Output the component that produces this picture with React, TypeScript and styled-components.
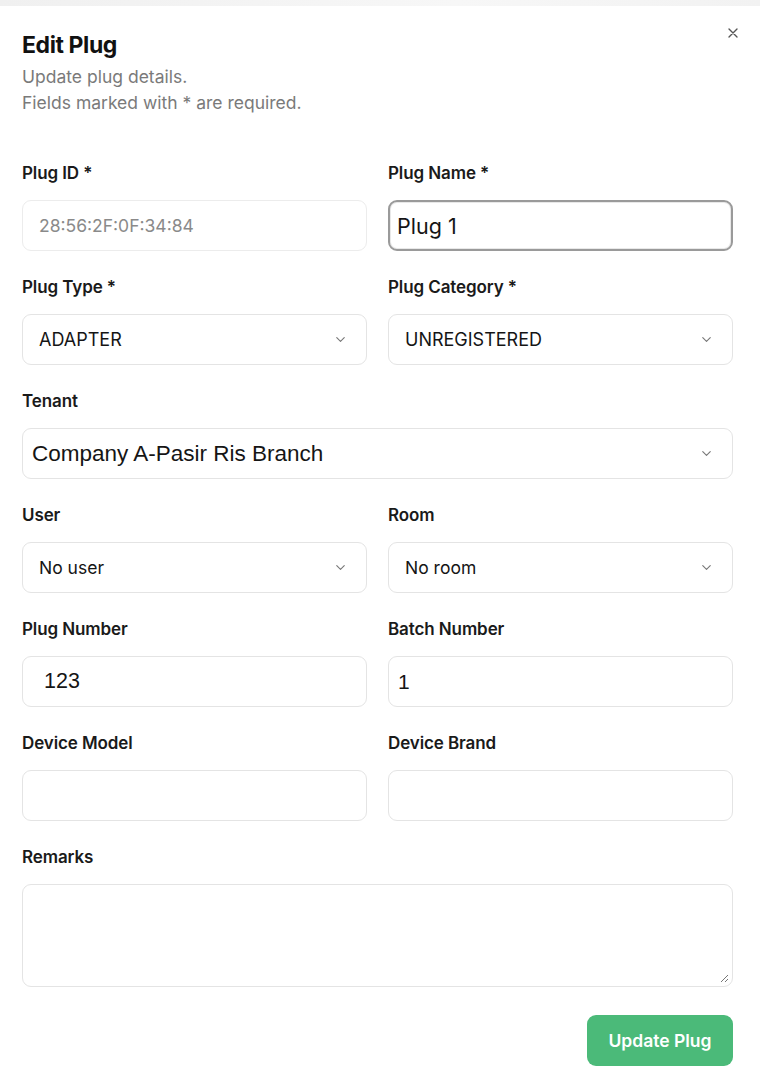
import React from 'react';
import styled, { createGlobalStyle } from 'styled-components';

const GlobalStyle = createGlobalStyle`
  html, body {
    margin: 0;
    padding: 0;
    background: #ffffff;
    font-family: 'Inter', 'Noto Sans', sans-serif;
    color: #111;
  }
  * { box-sizing: border-box; }
`;

const TopStrip = styled.div`
  height: 6px;
  background: linear-gradient(to right, #f0f0f0, #f7f7f7 60%, #f2f2f2);
`;

const Dialog = styled.div`
  position: relative;
  padding: 25px 27px 8px 22px;
  background: #fff;
`;

const CloseButton = styled.button`
  position: absolute;
  top: 16px;
  right: 16px;
  width: 22px;
  height: 22px;
  border: none;
  background: none;
  padding: 0;
  color: #555;
  display: flex;
  align-items: center;
  justify-content: center;
  cursor: pointer;
`;

const Title = styled.h2`
  margin: 0;
  font-size: 23px;
  font-weight: 700;
  letter-spacing: -0.4px;
  line-height: 29px;
`;

const Subtitle = styled.p`
  margin: 4px 0 0;
  font-size: 17.5px;
  line-height: 26px;
  color: #7a7a7a;
`;

const Form = styled.form`
  margin-top: 47px;
  display: grid;
  grid-template-columns: 1fr 1fr;
  column-gap: 21px;
  row-gap: 26px;
`;

const Field = styled.div<{ wide?: boolean }>`
  display: flex;
  flex-direction: column;
  gap: 17px;
  grid-column: ${p => (p.wide ? '1 / -1' : 'auto')};
`;

const Label = styled.label`
  font-size: 17px;
  font-weight: 600;
  line-height: 20px;
  letter-spacing: -0.1px;
  color: #1a1a1a;
`;

const Box = styled.div<{ focused?: boolean; muted?: boolean; pad?: number }>`
  height: 51px;
  border-radius: 9px;
  border: ${p => (p.focused ? '2px solid #9a9a9a' : `1px solid ${p.muted ? '#ececec' : '#e4e4e4'}`)};
  box-shadow: ${p => (p.focused ? 'inset 0 0 0 1px #e8e8e8' : 'none')};
  background: #fff;
  display: flex;
  align-items: center;
  padding-left: ${p => p.pad ?? 16}px;
  padding-right: 18px;
`;

const Value = styled.span<{ tone?: 'muted' | 'normal'; size?: number; sans?: boolean }>`
  flex: 1;
  font-size: ${p => p.size ?? 18}px;
  color: ${p => (p.tone === 'muted' ? '#8a8a8a' : '#151515')};
  font-family: ${p => (p.sans ? "'Liberation Sans', Arial, sans-serif" : "'Inter', sans-serif")};
  white-space: nowrap;
`;

const TextArea = styled.div`
  position: relative;
  height: 103px;
  border-radius: 9px;
  border: 1px solid #e4e4e4;
`;

const Grip = styled.svg`
  position: absolute;
  right: 3px;
  bottom: 3px;
`;

const Footer = styled.div`
  display: flex;
  justify-content: flex-end;
  margin-top: 28px;
`;

const SubmitButton = styled.button`
  width: 146px;
  height: 51px;
  border: none;
  border-radius: 9px;
  background: #4bba79;
  color: #fff;
  font-family: 'Inter', sans-serif;
  font-size: 17.5px;
  font-weight: 600;
  cursor: pointer;
`;

const Chevron = () => (
  <svg width="15" height="15" viewBox="0 0 24 24" fill="none" stroke="#777" strokeWidth="1.8" strokeLinecap="round" strokeLinejoin="round">
    <path d="m6 9 6 6 6-6" />
  </svg>
);

type Select = { label: string; value: string; size?: number; sans?: boolean; wide?: boolean; pad?: number };

const SelectField: React.FC<Select> = ({ label, value, size, sans, wide, pad }) => (
  <Field wide={wide}>
    <Label>{label}</Label>
    <Box pad={pad}>
      <Value size={size} sans={sans}>{value}</Value>
      <Chevron />
    </Box>
  </Field>
);

const App: React.FC = () => (
  <>
    <GlobalStyle />
    <TopStrip />
    <Dialog>
      <CloseButton aria-label="Close">
        <svg width="16" height="16" viewBox="0 0 24 24" fill="none" stroke="currentColor" strokeWidth="2" strokeLinecap="round">
          <path d="M18 6 6 18M6 6l12 12" />
        </svg>
      </CloseButton>
      <Title>Edit Plug</Title>
      <Subtitle>
        Update plug details.
        <br />
        Fields marked with * are required.
      </Subtitle>

      <Form>
        <Field>
          <Label>Plug ID *</Label>
          <Box muted>
            <Value tone="muted" size={17.5}>28:56:2F:0F:34:84</Value>
          </Box>
        </Field>
        <Field>
          <Label>Plug Name *</Label>
          <Box focused pad={7}>
            <Value size={21.5}>Plug 1</Value>
          </Box>
        </Field>

        <SelectField label="Plug Type *" value="ADAPTER" />
        <SelectField label="Plug Category *" value="UNREGISTERED" />
        <SelectField label="Tenant" value="Company A-Pasir Ris Branch" size={22.5} sans wide pad={9} />
        <SelectField label="User" value="No user" size={17.5} />
        <SelectField label="Room" value="No room" size={17.5} />

        <Field>
          <Label>Plug Number</Label>
          <Box pad={21}>
            <Value size={21.5} sans>123</Value>
          </Box>
        </Field>
        <Field>
          <Label>Batch Number</Label>
          <Box pad={9}>
            <Value size={21} sans>1</Value>
          </Box>
        </Field>
        <Field>
          <Label>Device Model</Label>
          <Box />
        </Field>
        <Field>
          <Label>Device Brand</Label>
          <Box />
        </Field>
        <Field wide>
          <Label>Remarks</Label>
          <TextArea>
            <Grip width="10" height="10" viewBox="0 0 10 10" stroke="#777" strokeWidth="1">
              <path d="M9 2 2 9M9 6 6 9" />
            </Grip>
          </TextArea>
        </Field>
      </Form>

      <Footer>
        <SubmitButton type="button">Update Plug</SubmitButton>
      </Footer>
    </Dialog>
  </>
);

export default App;
